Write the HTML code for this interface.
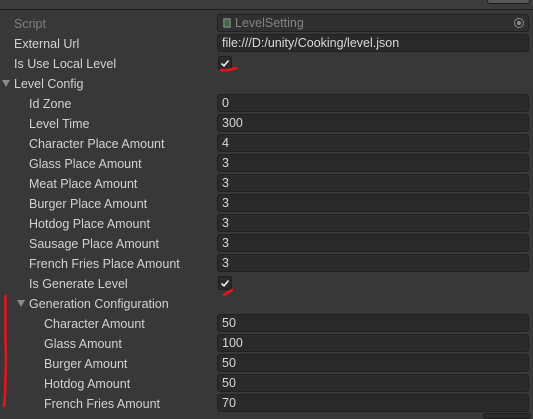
<!DOCTYPE html>
<html><head><meta charset="utf-8"><style>
*{margin:0;padding:0;box-sizing:border-box}
body{width:533px;height:416px;overflow:hidden;background:#383838;font-family:"Liberation Sans",sans-serif;font-size:12.5px;color:#d2d2d2;position:relative}
.top{position:absolute;left:0;top:0;width:533px;height:10px;background:#3c3c3c;border-bottom:1px solid #1e1e1e}
.btn{position:absolute;left:487px;top:-3px;width:43px;height:7px;border:1px solid #1e1e1e;border-radius:3px;background:#585858}
.row{position:absolute;left:0;width:533px;height:20px}
.lab{position:absolute;top:3.5px;white-space:nowrap}
.f{position:absolute;left:217px;top:1px;width:312px;height:18px;background:#2a2a2a;border:1px solid #212121;border-radius:3px;padding-left:4px;line-height:17px;color:#d8d8d8}
.cb{position:absolute;left:218px;top:3px;width:14px;height:14px;background:#2a2a2a;border:1px solid #1e1e1e;border-radius:2px}
.tri{position:absolute;top:7px;width:0;height:0;border-left:4px solid transparent;border-right:4px solid transparent;border-top:7px solid #8a8a8a}
</style></head><body>
<div class="top"></div><div class="btn"></div>

<div class="row" style="top:13px"><div class="lab" style="left:14px;color:#7f7f7f">Script</div>
<div class="f" style="background:#303030;color:#838383;padding-left:17px">LevelSetting
<div style="position:absolute;left:5px;top:3px;width:8px;height:10px;background:#707070;border-radius:1px"><div style="position:absolute;left:2px;top:2px;width:4px;height:6px;background:#3e6b3e"></div></div>
<div style="position:absolute;right:4px;top:3px;width:10px;height:10px;border:1px solid #8a8a8a;border-radius:50%"><div style="position:absolute;left:2px;top:2px;width:4px;height:4px;background:#8a8a8a;border-radius:50%"></div></div>
</div></div>

<div class="row" style="top:33px"><div class="lab" style="left:14px">External Url</div><div class="f">file:///D:/unity/Cooking/level.json</div></div>
<div class="row" style="top:53px"><div class="lab" style="left:14px">Is Use Local Level</div><div class="cb"><svg width="12" height="12" style="position:absolute;left:0;top:0"><path d="M2.5 6.5 L5 8.8 L9.5 3.5" stroke="#eee" stroke-width="1.6" fill="none"/></svg></div></div>
<div class="row" style="top:73px"><div class="tri" style="left:2px"></div><div class="lab" style="left:14px">Level Config</div></div>

<div class="row" style="top:93px"><div class="lab" style="left:29px">Id Zone</div><div class="f">0</div></div>
<div class="row" style="top:113px"><div class="lab" style="left:29px">Level Time</div><div class="f">300</div></div>
<div class="row" style="top:133px"><div class="lab" style="left:29px">Character Place Amount</div><div class="f">4</div></div>
<div class="row" style="top:153px"><div class="lab" style="left:29px">Glass Place Amount</div><div class="f">3</div></div>
<div class="row" style="top:173px"><div class="lab" style="left:29px">Meat Place Amount</div><div class="f">3</div></div>
<div class="row" style="top:193px"><div class="lab" style="left:29px">Burger Place Amount</div><div class="f">3</div></div>
<div class="row" style="top:213px"><div class="lab" style="left:29px">Hotdog Place Amount</div><div class="f">3</div></div>
<div class="row" style="top:233px"><div class="lab" style="left:29px">Sausage Place Amount</div><div class="f">3</div></div>
<div class="row" style="top:253px"><div class="lab" style="left:29px">French Fries Place Amount</div><div class="f">3</div></div>
<div class="row" style="top:273px"><div class="lab" style="left:29px">Is Generate Level</div><div class="cb"><svg width="12" height="12" style="position:absolute;left:0;top:0"><path d="M2.5 6.5 L5 8.8 L9.5 3.5" stroke="#eee" stroke-width="1.6" fill="none"/></svg></div></div>
<div class="row" style="top:293px"><div class="tri" style="left:17px"></div><div class="lab" style="left:29px">Generation Configuration</div></div>

<div class="row" style="top:313px"><div class="lab" style="left:44px">Character Amount</div><div class="f">50</div></div>
<div class="row" style="top:333px"><div class="lab" style="left:44px">Glass Amount</div><div class="f">100</div></div>
<div class="row" style="top:353px"><div class="lab" style="left:44px">Burger Amount</div><div class="f">50</div></div>
<div class="row" style="top:373px"><div class="lab" style="left:44px">Hotdog Amount</div><div class="f">50</div></div>
<div class="row" style="top:393px"><div class="lab" style="left:44px">French Fries Amount</div><div class="f">70</div></div>
<div style="position:absolute;left:483px;top:413px;width:48px;height:6px;border:1px solid #1e1e1e;border-radius:3px;background:#2a2a2a"></div>

<svg width="533" height="416" style="position:absolute;left:0;top:0">
<path d="M221 70 Q228 71 236 68" stroke="#e8141c" stroke-width="2.6" fill="none" stroke-linecap="round"/>
<path d="M224 295 L232 290" stroke="#e8141c" stroke-width="2.6" fill="none" stroke-linecap="round"/>
<path d="M5.5 296 L5.5 340 L6 360 L5 395 L4 406" stroke="#e8141c" stroke-width="2.6" fill="none" stroke-linecap="round"/>
</svg>
</body></html>
